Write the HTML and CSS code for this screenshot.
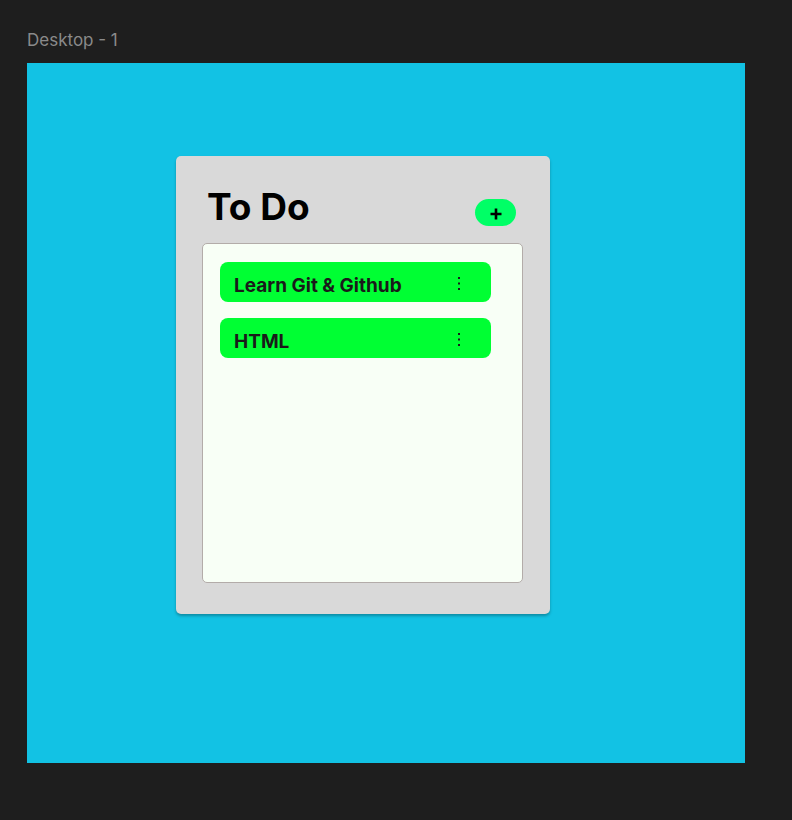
FILE: index.html
```html
<!DOCTYPE html>
<html>
<head>
<meta charset="utf-8">
<link rel="stylesheet" href="styles.css">
</head>
<body>
<div class="label">Desktop - 1</div>
<div class="frame">
  <div class="card">
    <div class="header">
      <h1 class="title">To Do</h1>
      <button class="add" aria-label="Add">
        <svg width="12" height="12" viewBox="0 0 12 12"><path d="M6 0.5V11.5M0.5 6H11.5" stroke="#000" stroke-width="2.6"/></svg>
      </button>
    </div>
    <div class="list">
      <div class="item">
        <span class="item-text">Learn Git &amp; Github</span>
        <svg class="dots" width="2" height="14" viewBox="0 0 2 14"><rect x="0" y="0" width="2" height="2"/><rect x="0" y="5.5" width="2" height="2"/><rect x="0" y="11" width="2" height="2"/></svg>
      </div>
      <div class="item">
        <span class="item-text">HTML</span>
        <svg class="dots" width="2" height="14" viewBox="0 0 2 14"><rect x="0" y="0" width="2" height="2"/><rect x="0" y="5.5" width="2" height="2"/><rect x="0" y="11" width="2" height="2"/></svg>
      </div>
    </div>
  </div>
</div>
</body>
</html>
```
FILE: styles.css
```css
html, body {
  margin: 0;
  padding: 0;
  background: #1e1e1e;
  font-family: Inter, "Noto Sans", sans-serif;
}
body {
  width: 792px;
  height: 820px;
  overflow: hidden;
}
.label {
  color: #8a8a8a;
  font-size: 17px;
  line-height: 20px;
  padding: 30px 0 0 27px;
  height: 63px;
  box-sizing: border-box;
}
.frame {
  margin-left: 27px;
  width: 718px;
  height: 700px;
  background: #12c2e4;
  padding: 93px 0 0 149px;
  box-sizing: border-box;
}
.card {
  width: 374px;
  height: 458px;
  box-sizing: border-box;
  background: #d9d9d9;
  border-radius: 5px;
  box-shadow: 0 2px 3px rgba(0, 0, 0, 0.28);
  padding: 0 27px 31px 26px;
  display: flex;
  flex-direction: column;
}
.header {
  height: 87px;
  box-sizing: border-box;
  padding-top: 32px;
  display: flex;
  justify-content: space-between;
  align-items: flex-start;
}
.title {
  margin: 0 0 0 5px;
  font-size: 37px;
  line-height: 38px;
  font-weight: 700;
  color: #000;
}
.add {
  margin: 11px 7px 0 0;
  width: 41px;
  height: 27px;
  border: none;
  border-radius: 14px;
  background: #00ff66;
  display: flex;
  align-items: center;
  justify-content: center;
  padding: 3px 0 0 0;
}
.list {
  flex: 1;
  background: #f8fff6;
  border: 1px solid #b3aca9;
  border-radius: 5px;
  padding: 18px 0 0 17px;
  display: flex;
  flex-direction: column;
  gap: 16px;
}
.item {
  width: 271px;
  height: 40px;
  box-sizing: border-box;
  background: #00ff33;
  border-radius: 8px;
  display: flex;
  align-items: center;
  justify-content: space-between;
  padding: 0 31px 0 14px;
}
.item-text {
  font-size: 19px;
  font-weight: 700;
  color: #1a1a1a;
  padding-top: 6px;
}
.dots {
  fill: #1a1a1a;
  margin-top: 3px;
}
```
